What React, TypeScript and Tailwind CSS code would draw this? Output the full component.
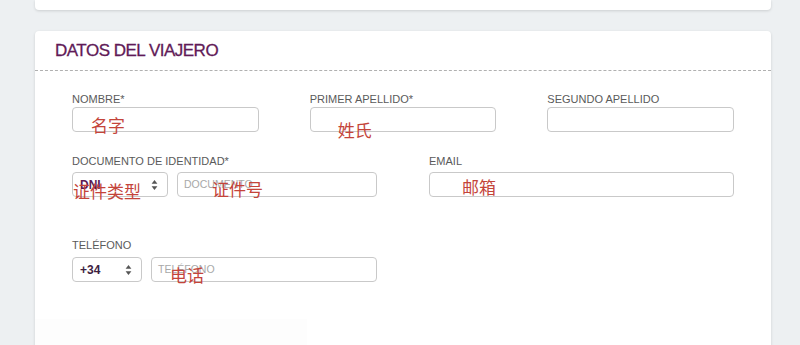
import React from "react";

const sans = { fontFamily: '"Liberation Sans", Arial, sans-serif' };

function Label({ children, mb }: { children: React.ReactNode; mb: string }) {
  return (
    <div className={`text-[11px] leading-[13px] text-[#5a5a5a] whitespace-nowrap ${mb}`}>{children}</div>
  );
}

function Note({ text, cls }: { text: string; cls: string }) {
  return (
    <span
      className={`absolute text-[17px] leading-[17px] text-[#c4443a] whitespace-nowrap pointer-events-none ${cls}`}
      style={{ fontFamily: '"Noto Sans CJK SC", "Noto Sans", sans-serif' }}
    >
      {text}
    </span>
  );
}

function Arrows() {
  return (
    <svg width="7" height="11" viewBox="0 0 7 11" className="absolute right-[9px] top-1/2 -translate-y-1/2">
      <path d="M3.5 0.5 L6.4 4.3 H0.6 Z" fill="#555" />
      <path d="M3.5 10.5 L6.4 6.7 H0.6 Z" fill="#555" />
    </svg>
  );
}

export default function App() {
  return (
    <div className="w-[800px] h-[345px] overflow-hidden bg-[#edf0f2]" style={sans}>
      <div className="ml-[35px] w-[736px] h-[10px] bg-white rounded-b-[4px] shadow-[0_1px_3px_rgba(0,0,0,0.14)]" />
      <div className="ml-[35px] mt-[21px] w-[736px] h-[330px] bg-white rounded-[4px] shadow-[0_1px_3px_rgba(0,0,0,0.14)]">
        <div className="h-[40px] pl-[20px] flex items-center border-b border-dashed border-[#b0b0b0]">
          <h2 className="text-[17px] font-normal tracking-[-0.5px] text-[#611a57] mt-[1px]" style={{ WebkitTextStroke: "0.3px #611a57" }}>
            DATOS DEL VIAJERO
          </h2>
        </div>
        <div className="px-[37px] pt-[22px]">
          <div className="grid grid-cols-3 gap-x-[51px]">
            <div>
              <Label mb="mb-[1px]">NOMBRE*</Label>
              <div className="relative h-[25px] border border-[#c9c9c9] rounded-[4px]">
                <Note text="名字" cls="left-[18px] top-[8px]" />
              </div>
            </div>
            <div>
              <Label mb="mb-[1px]">PRIMER APELLIDO*</Label>
              <div className="relative h-[25px] border border-[#c9c9c9] rounded-[4px]">
                <Note text="姓氏" cls="left-[27px] top-[13px]" />
              </div>
            </div>
            <div>
              <Label mb="mb-[1px]">SEGUNDO APELLIDO</Label>
              <div className="h-[25px] border border-[#c9c9c9] rounded-[4px]" />
            </div>
          </div>

          <div className="grid grid-cols-2 gap-x-[52px] mt-[23px]">
            <div>
              <Label mb="mb-[4px]">DOCUMENTO DE IDENTIDAD*</Label>
              <div className="flex gap-[9px]">
                <div className="relative w-[96px] h-[25px] border border-[#c9c9c9] rounded-[4px] flex items-center pl-[7px]">
                  <span className="text-[12px] font-bold text-[#5c1a52]">DNI</span>
                  <Arrows />
                  <Note text="证件类型" cls="left-[0px] top-[9px]" />
                </div>
                <div className="relative flex-1 h-[25px] border border-[#c9c9c9] rounded-[4px] flex items-center pl-[6px]">
                  <span className="text-[10.5px] text-[#a8a8a8]">DOCUMENTO</span>
                  <Note text="证件号" cls="left-[34px] top-[7px]" />
                </div>
              </div>
            </div>
            <div>
              <Label mb="mb-[4px]">EMAIL</Label>
              <div className="relative h-[25px] border border-[#c9c9c9] rounded-[4px]">
                <Note text="邮箱" cls="left-[32px] top-[5px]" />
              </div>
            </div>
          </div>

          <div className="grid grid-cols-2 gap-x-[52px] mt-[42px]">
            <div>
              <Label mb="mb-[5px]">TELÉFONO</Label>
              <div className="flex gap-[9px]">
                <div className="relative w-[70px] h-[25px] border border-[#c9c9c9] rounded-[4px] flex items-center pl-[7px]">
                  <span className="text-[12px] font-bold text-[#3d2140]">+34</span>
                  <Arrows />
                </div>
                <div className="relative flex-1 h-[25px] border border-[#c9c9c9] rounded-[4px] flex items-center pl-[6px]">
                  <span className="text-[10.5px] text-[#a8a8a8]">TELÉFONO</span>
                  <Note text="电话" cls="left-[18px] top-[8px]" />
                </div>
              </div>
            </div>
            <div />
          </div>
        </div>
        <div className="mt-[37px] w-[272px] h-[30px] bg-[#fdfdfd]" />
      </div>
    </div>
  );
}
